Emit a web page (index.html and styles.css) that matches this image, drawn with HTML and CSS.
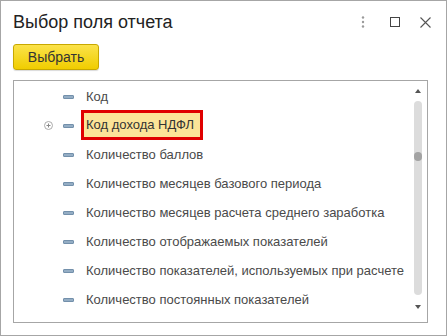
FILE: index.html
```html
<!DOCTYPE html>
<html lang="ru">
<head>
    <meta charset="UTF-8">
    <title>Выбор поля отчета</title>
    <link rel="stylesheet" href="styles.css">
</head>
<body>
    <div class="window">
        <div class="header">
            <h1>Выбор поля отчета</h1>
            <div class="header-buttons">
                <svg class="icon-more" width="4" height="12" viewBox="0 0 4 12">
                    <circle cx="2" cy="1.5" r="1.2" fill="#9a9a9a"/>
                    <circle cx="2" cy="6" r="1.2" fill="#9a9a9a"/>
                    <circle cx="2" cy="10.5" r="1.2" fill="#9a9a9a"/>
                </svg>
                <svg class="icon-max" width="10" height="10" viewBox="0 0 10 10">
                    <rect x="0.5" y="0.5" width="9" height="9" fill="none" stroke="#444" stroke-width="1"/>
                </svg>
                <svg class="icon-close" width="11" height="11" viewBox="0 0 11 11">
                    <path d="M0.5 0.5 L10.5 10.5 M10.5 0.5 L0.5 10.5" stroke="#555" stroke-width="1.1"/>
                </svg>
            </div>
        </div>
        <div class="toolbar">
            <button class="btn-select">Выбрать</button>
        </div>
        <div class="list-box">
            <div class="tree">
                <div class="row"><span class="expand"></span><span class="field-icon"></span><span class="label">Код</span></div>
                <div class="row"><span class="expand"><svg width="9" height="9" viewBox="0 0 9 9"><circle cx="4.5" cy="4.5" r="4" fill="none" stroke="#aaa"/><path d="M2.5 4.5 H6.5 M4.5 2.5 V6.5" stroke="#888"/></svg></span><span class="field-icon"></span><span class="label current">Код дохода НДФЛ</span></div>
                <div class="row"><span class="expand"></span><span class="field-icon"></span><span class="label">Количество баллов</span></div>
                <div class="row"><span class="expand"></span><span class="field-icon"></span><span class="label">Количество месяцев базового периода</span></div>
                <div class="row"><span class="expand"></span><span class="field-icon"></span><span class="label">Количество месяцев расчета среднего заработка</span></div>
                <div class="row"><span class="expand"></span><span class="field-icon"></span><span class="label">Количество отображаемых показателей</span></div>
                <div class="row"><span class="expand"></span><span class="field-icon"></span><span class="label">Количество показателей, используемых при расчете</span></div>
                <div class="row"><span class="expand"></span><span class="field-icon"></span><span class="label">Количество постоянных показателей</span></div>
            </div>
            <div class="scrollbar">
                <span class="arrow-up"></span>
                <div class="track"><span class="thumb"></span></div>
                <span class="arrow-down"></span>
            </div>
        </div>
    </div>
</body>
</html>
```

FILE: styles.css
```css
* {
    margin: 0;
    padding: 0;
    box-sizing: border-box;
    font-family: Arial, "Liberation Sans", sans-serif;
}

body {
    background: #fff;
}

.window {
    width: 447px;
    height: 336px;
    border: 1px solid #a6a6a6;
    display: flex;
    flex-direction: column;
}

.header {
    height: 42px;
    display: flex;
    align-items: center;
    justify-content: space-between;
    padding: 0 15px 0 12px;
}

h1 {
    font-size: 18px;
    font-weight: normal;
    color: #222;
    margin-top: 1px;
}

.header-buttons {
    display: flex;
    align-items: center;
}

.icon-more {
    margin-right: 25px;
}

.icon-close {
    margin-left: 20px;
}

.toolbar {
    padding: 1px 0 0 12px;
    height: 37px;
}

.btn-select {
    width: 86px;
    height: 26px;
    border: 1px solid #c8a800;
    border-radius: 3px;
    background: linear-gradient(#fbe24a, #f0cd00);
    color: #333;
    font-size: 14px;
    box-shadow: 0 1px 1px rgba(0, 0, 0, 0.15);
}

.list-box {
    margin: 0 18px 0 12px;
    height: 243px;
    border: 1px solid #a6a6a6;
    display: flex;
}

.tree {
    flex: 1;
    padding-top: 1px;
}

.row {
    height: 29px;
    display: flex;
    align-items: center;
}

.expand {
    width: 49px;
    padding-left: 30px;
    display: flex;
    align-items: center;
}

.field-icon {
    width: 11px;
    height: 4px;
    background: #94adc4;
    border: 1px solid #7390ab;
    border-radius: 1px;
    margin-right: 12px;
}

.label {
    font-size: 13px;
    color: #4a4a4a;
    white-space: nowrap;
}

.label.current {
    margin-left: -5px;
    margin-top: -1px;
    height: 30px;
    line-height: 24px;
    padding: 0 6px 0 2px;
    border: 3px solid #e00000;
    background: #fce498;
    color: #333;
}

.scrollbar {
    width: 14px;
    margin-right: 2px;
    display: flex;
    flex-direction: column;
    align-items: center;
    padding-top: 8px;
}

.arrow-up {
    width: 0;
    height: 0;
    border-left: 3px solid transparent;
    border-right: 3px solid transparent;
    border-bottom: 4px solid #555;
}

.track {
    margin-top: 8px;
    width: 8px;
    height: 194px;
    border-radius: 4px;
    background: #dcdcdc;
    position: relative;
}

.thumb {
    position: absolute;
    left: 0;
    top: 51px;
    width: 8px;
    height: 9px;
    border-radius: 4px;
    background: #a3a3a3;
}

.arrow-down {
    margin-top: 10px;
    width: 0;
    height: 0;
    border-left: 3px solid transparent;
    border-right: 3px solid transparent;
    border-top: 4px solid #555;
}
```
